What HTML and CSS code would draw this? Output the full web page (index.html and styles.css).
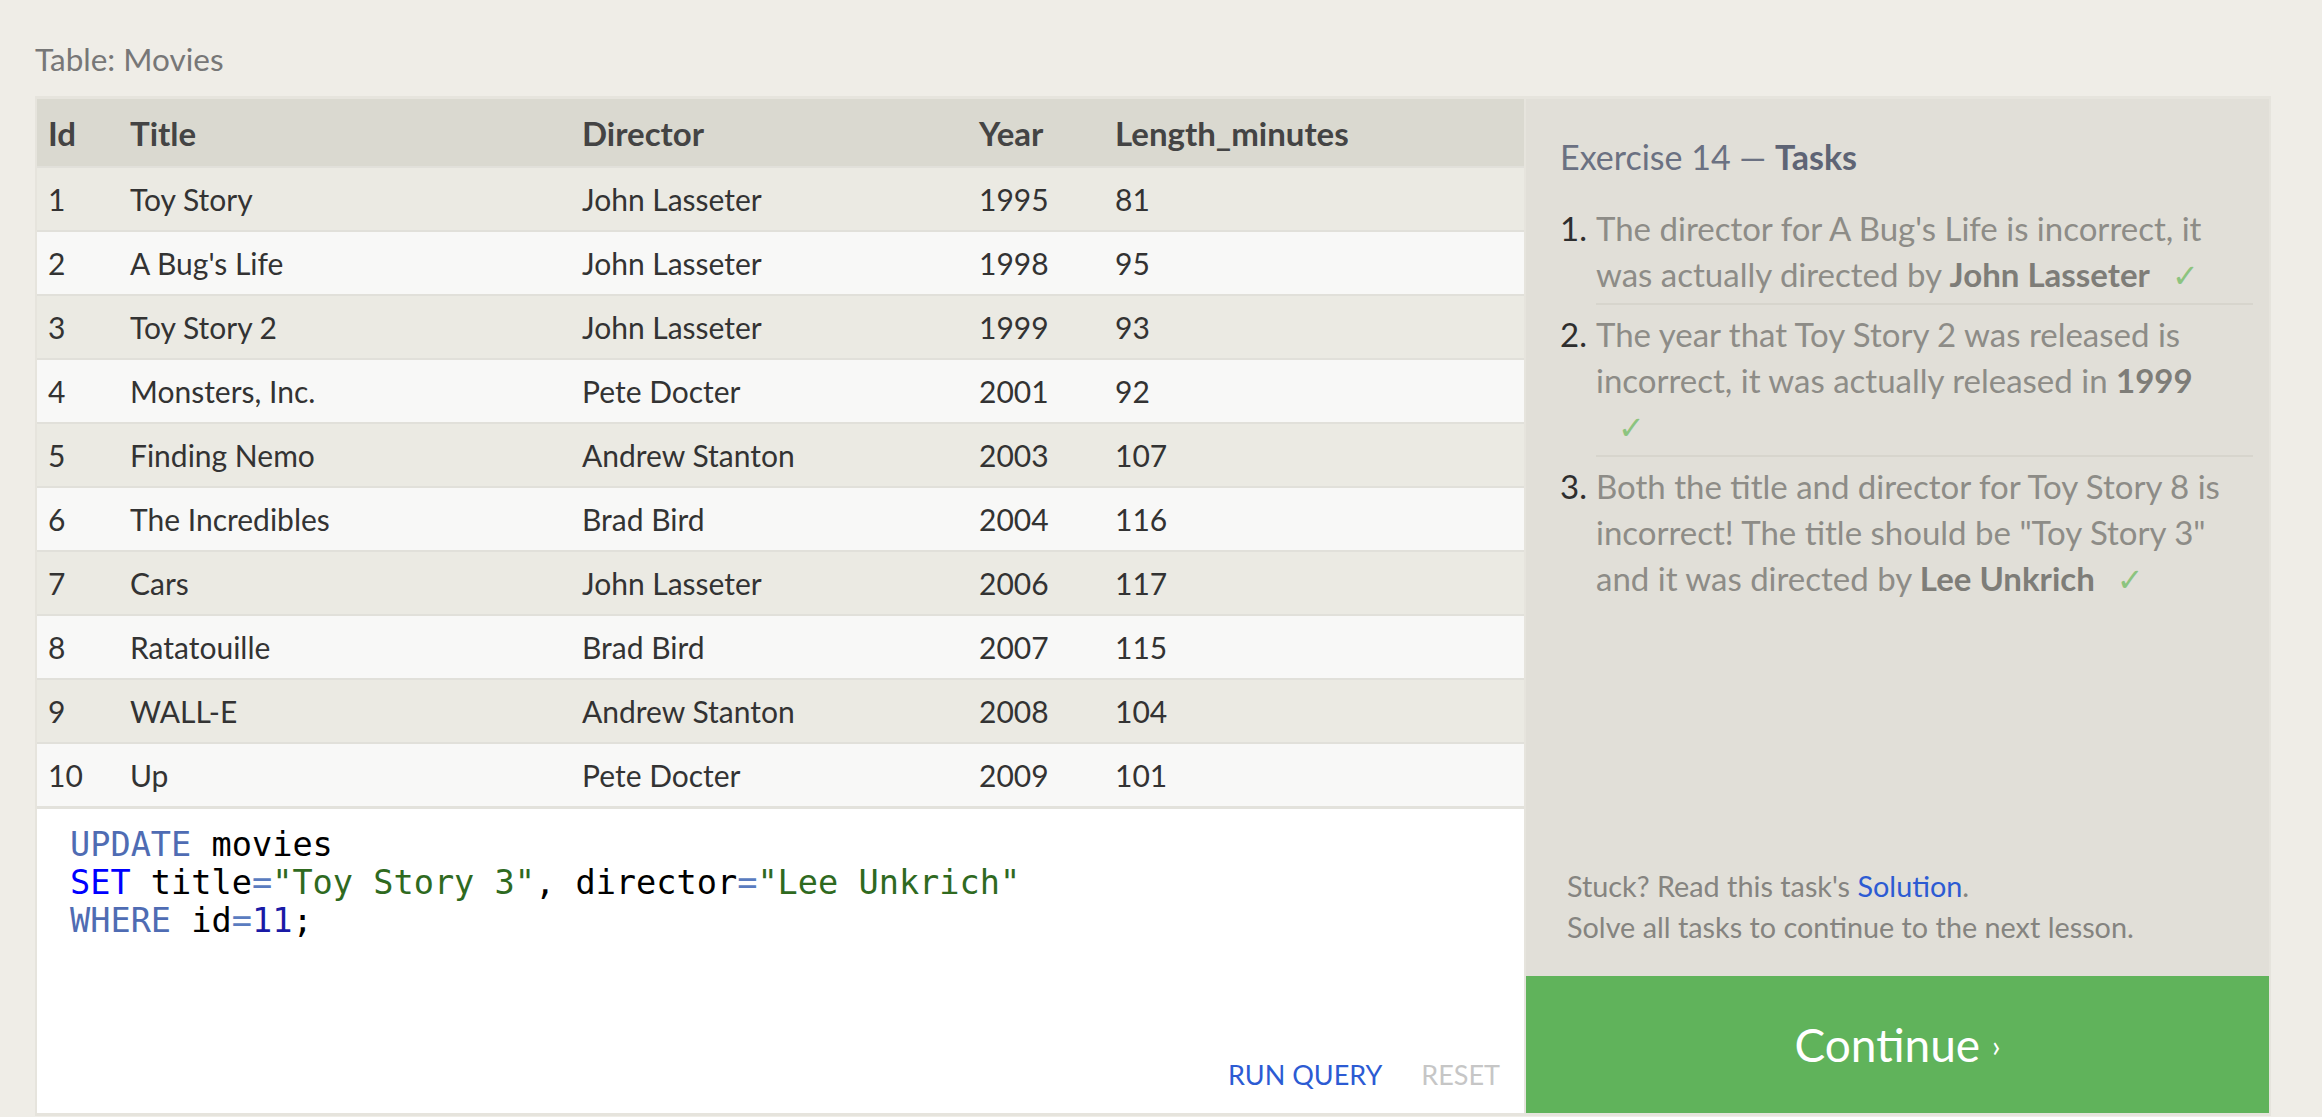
FILE: index.html
```html
<!DOCTYPE html>
<html lang="en">
<head>
<meta charset="utf-8">
<title>SQL Lesson – Exercise 14</title>
<link rel="stylesheet" href="styles.css">
</head>
<body>
<div class="page">
  <div class="table-label">Table: Movies</div>
  <div class="frame">
    <div class="left">
      <div class="grid">
        <div class="row head"><div>Id</div><div>Title</div><div>Director</div><div>Year</div><div>Length_minutes</div></div>
        <div class="row odd"><div>1</div><div>Toy Story</div><div>John Lasseter</div><div>1995</div><div>81</div></div>
        <div class="row even"><div>2</div><div>A Bug's Life</div><div>John Lasseter</div><div>1998</div><div>95</div></div>
        <div class="row odd"><div>3</div><div>Toy Story 2</div><div>John Lasseter</div><div>1999</div><div>93</div></div>
        <div class="row even"><div>4</div><div>Monsters, Inc.</div><div>Pete Docter</div><div>2001</div><div>92</div></div>
        <div class="row odd"><div>5</div><div>Finding Nemo</div><div>Andrew Stanton</div><div>2003</div><div>107</div></div>
        <div class="row even"><div>6</div><div>The Incredibles</div><div>Brad Bird</div><div>2004</div><div>116</div></div>
        <div class="row odd"><div>7</div><div>Cars</div><div>John Lasseter</div><div>2006</div><div>117</div></div>
        <div class="row even"><div>8</div><div>Ratatouille</div><div>Brad Bird</div><div>2007</div><div>115</div></div>
        <div class="row odd"><div>9</div><div>WALL-E</div><div>Andrew Stanton</div><div>2008</div><div>104</div></div>
        <div class="row even"><div>10</div><div>Up</div><div>Pete Docter</div><div>2009</div><div>101</div></div>
      </div>
      <div class="editor">
<pre class="code"><span class="kw">UPDATE</span> movies
<span class="kw2">SET</span> title<span class="op">=</span><span class="str">"Toy Story 3"</span>, director<span class="op">=</span><span class="str">"Lee Unkrich"</span>
<span class="kw">WHERE</span> id<span class="op">=</span><span class="num">11</span>;</pre>
        <div class="actions"><span class="run">RUN QUERY</span><span class="reset">RESET</span></div>
      </div>
    </div>
    <div class="right">
      <div class="tasks">
        <h2 class="tasks-title">Exercise 14 — <b>Tasks</b></h2>
        <ol class="task-list">
          <li class="task"><span class="task-num">1.</span><div class="task-body">The director for A Bug's Life is incorrect, it<br>was actually directed by <b>John Lasseter</b><span class="check">✓</span></div></li>
          <li class="task"><span class="task-num">2.</span><div class="task-body">The year that Toy Story 2 was released is<br>incorrect, it was actually released in <b>1999</b><br><span class="check">✓</span></div></li>
          <li class="task"><span class="task-num">3.</span><div class="task-body last">Both the title and director for Toy Story 8 is<br>incorrect! The title should be "Toy Story 3"<br>and it was directed by <b>Lee Unkrich</b><span class="check">✓</span></div></li>
        </ol>
      </div>
      <div class="help">
        <div>Stuck? Read this task's <a class="link" href="#">Solution</a>.</div>
        <div>Solve all tasks to continue to the next lesson.</div>
      </div>
      <div class="continue">Continue <span class="chev">›</span></div>
    </div>
  </div>
</div>
</body>
</html>
```
FILE: styles.css
```css
html, body {
  margin: 0;
  padding: 0;
  background: #efede7;
}
body {
  font-family: Lato, "Open Sans", sans-serif;
  color: #333;
}
.page {
  padding: 41px 0 0 35px;
}
.table-label {
  font-size: 31.5px;
  line-height: 36px;
  color: #777;
  margin-bottom: 19px;
}
.frame {
  width: 2232px;
  height: 1014px;
  display: flex;
  gap: 2px;
  background: #e6e4dd;
  border-style: solid;
  border-color: #e6e4dd;
  border-width: 3px 2px 3px 2px;
}
.left {
  width: 1487px;
  display: flex;
  flex-direction: column;
}
.grid {
  display: flex;
  flex-direction: column;
}
.row {
  display: grid;
  grid-template-columns: 82px 452px 397px 136px 420px;
  align-items: center;
  height: 64px;
  box-sizing: border-box;
  border-top: 2px solid #e1e0da;
  font-size: 30px;
  color: #333;
}
.row > div {
  padding-left: 11px;
  white-space: nowrap;
}
.row.head {
  height: 67px;
  border-top: 0;
  background: #dad9d0;
  font-weight: bold;
  color: #444;
  font-size: 33px;
}
.row.odd { background: #ebeae3; }
.row.even { background: #f8f8f7; }
.editor {
  flex: 1;
  background: #fff;
  border-top: 3px solid #e3e2dc;
  display: flex;
  flex-direction: column;
}
.code {
  margin: 0;
  padding: 17px 0 0 33px;
  font-family: "DejaVu Sans Mono", monospace;
  font-size: 33.6px;
  line-height: 38px;
  color: #000;
}
.kw { color: #4f6cb3; }
.kw2 { color: #0000ff; }
.op { color: #5a7cc0; }
.str { color: #2f6a1f; }
.num { color: #1a1aa6; }
.actions {
  margin-top: auto;
  display: flex;
  justify-content: flex-end;
  gap: 39px;
  padding: 0 24px 22px 0;
  font-size: 27px;
  line-height: 32px;
}
.run { color: #2c5bd3; }
.reset { color: #c6c6c6; }
.right {
  width: 743px;
  background: #e1dfd8;
  display: flex;
  flex-direction: column;
}
.tasks {
  padding: 38px 16px 0 34px;
}
.tasks-title {
  margin: 0 0 22px 0;
  font-size: 34px;
  line-height: 40px;
  font-weight: normal;
  color: #6b7182;
}
.tasks-title b {
  color: #5e6475;
}
.task-list {
  list-style: none;
  margin: 0;
  padding: 0;
}
.task {
  display: flex;
}
.task-num {
  width: 36px;
  flex: none;
  font-size: 33px;
  line-height: 46px;
  padding-top: 6px;
  color: #2e2e2e;
}
.task-body {
  flex: 1;
  font-size: 33px;
  line-height: 46px;
  color: #8d8c87;
  padding: 6px 0 4px 0;
  border-bottom: 2px solid #d7d5cd;
  white-space: nowrap;
}
.task-body.last {
  border-bottom: 0;
}
.task-body b {
  color: #7e7d78;
}
.check {
  display: inline-block;
  margin-left: 22px;
  color: #8cc47f;
  font-family: "DejaVu Sans", sans-serif;
  font-size: 32px;
}
.help {
  margin-top: auto;
  padding: 0 0 28px 41px;
  font-size: 28.8px;
  line-height: 41px;
  color: #858480;
}
.link {
  color: #2c5bd3;
  text-decoration: none;
}
.continue {
  height: 137px;
  background: #60b35b;
  color: #fff;
  font-size: 46px;
  display: flex;
  align-items: center;
  justify-content: center;
}
.chev {
  font-size: 30px;
  margin-left: 12px;
}
```
